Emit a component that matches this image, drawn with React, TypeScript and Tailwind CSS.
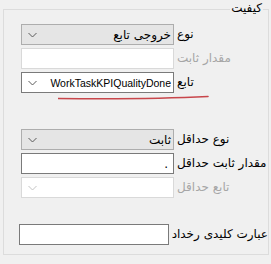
import React from "react";

const Chevron = ({ disabled }: { disabled?: boolean }) => (
  <svg width="9" height="6" viewBox="0 0 9 6" className="shrink-0">
    <path
      d="M0.5 1 L4.5 5 L8.5 1"
      fill="none"
      stroke={disabled ? "#c4c4c4" : "#5a5a5a"}
      strokeWidth="1"
    />
  </svg>
);

const Label = ({ text, disabled }: { text: string; disabled?: boolean }) => (
  <span
    dir="rtl"
    className={`ml-[3px] mt-[2px] text-[12px] leading-[16px] whitespace-nowrap ${
      disabled ? "text-[#a6a6a6]" : "text-black"
    }`}
  >
    {text}
  </span>
);

const Combo = ({
  value,
  variant,
  latin,
}: {
  value?: string;
  variant: "grey" | "white" | "disabled";
  latin?: boolean;
}) => {
  const cls =
    variant === "grey"
      ? "bg-[#e5e5e5] border-[#adadad]"
      : variant === "white"
      ? "bg-white border-[#7a7a7a]"
      : "bg-white border-[#d9d9d9]";
  return (
    <div
      className={`w-[153px] h-[21px] border ${cls} flex items-center pl-[6px] pr-[2px]`}
    >
      <Chevron disabled={variant === "disabled"} />
      <span
        className={`flex-1 text-right whitespace-nowrap text-black ${
          latin
            ? "font-['Liberation_Sans',sans-serif] text-[10.5px] leading-[14px]"
            : "text-[12px] leading-[16px]"
        }`}
      >
        {value}
      </span>
    </div>
  );
};

const TextBox = ({
  value,
  disabled,
}: {
  value?: string;
  disabled?: boolean;
}) => (
  <div
    className={`w-[153px] h-[21px] border bg-white flex items-center justify-end pr-[5px] text-[12px] ${
      disabled ? "border-[#d9d9d9]" : "border-[#7a7a7a]"
    }`}
  >
    {value}
  </div>
);

export default function App() {
  return (
    <div className="w-[271px] h-[264px] bg-[#f0f0f0] pt-[9px] pl-[3px] font-['DejaVu_Sans',sans-serif]">
      <div className="relative w-[266px] h-[246px] border border-[#dcdcdc] pl-[17px] pt-[14px] flex flex-col">
        <span
          dir="rtl"
          className="absolute right-[5px] top-[-10px] bg-[#f0f0f0] px-[1px] text-[12px] leading-[16px] text-black"
        >
          کیفیت
        </span>

        <div className="flex items-start">
          <Combo variant="grey" value="خروجی تابع" />
          <Label text="نوع" />
        </div>
        <div className="flex items-start mt-[3px]">
          <TextBox disabled />
          <Label text="مقدار ثابت" disabled />
        </div>
        <div className="flex items-start mt-[3px]">
          <Combo variant="white" value="WorkTaskKPIQualityDone" latin />
          <Label text="تابع" />
        </div>

        <div className="flex items-start mt-[36px]">
          <Combo variant="grey" value="ثابت" />
          <Label text="نوع حداقل" />
        </div>
        <div className="flex items-start mt-[3px]">
          <TextBox value="." />
          <Label text="مقدار ثابت حداقل" />
        </div>
        <div className="flex items-start mt-[3px]">
          <Combo variant="disabled" />
          <Label text="تابع حداقل" disabled />
        </div>

        <div className="flex items-start mt-[26px] -ml-[2px]">
          <TextBox />
          <Label text="عبارت کلیدی رخداد" />
        </div>

        <svg
          className="absolute left-[54px] top-[85px]"
          width="152"
          height="6"
          viewBox="0 0 152 6"
        >
          <path
            d="M0 3.5 Q90 4.5 150 1.5"
            fill="none"
            stroke="#c8464b"
            strokeWidth="1.6"
            strokeLinecap="round"
          />
        </svg>
      </div>
    </div>
  );
}
